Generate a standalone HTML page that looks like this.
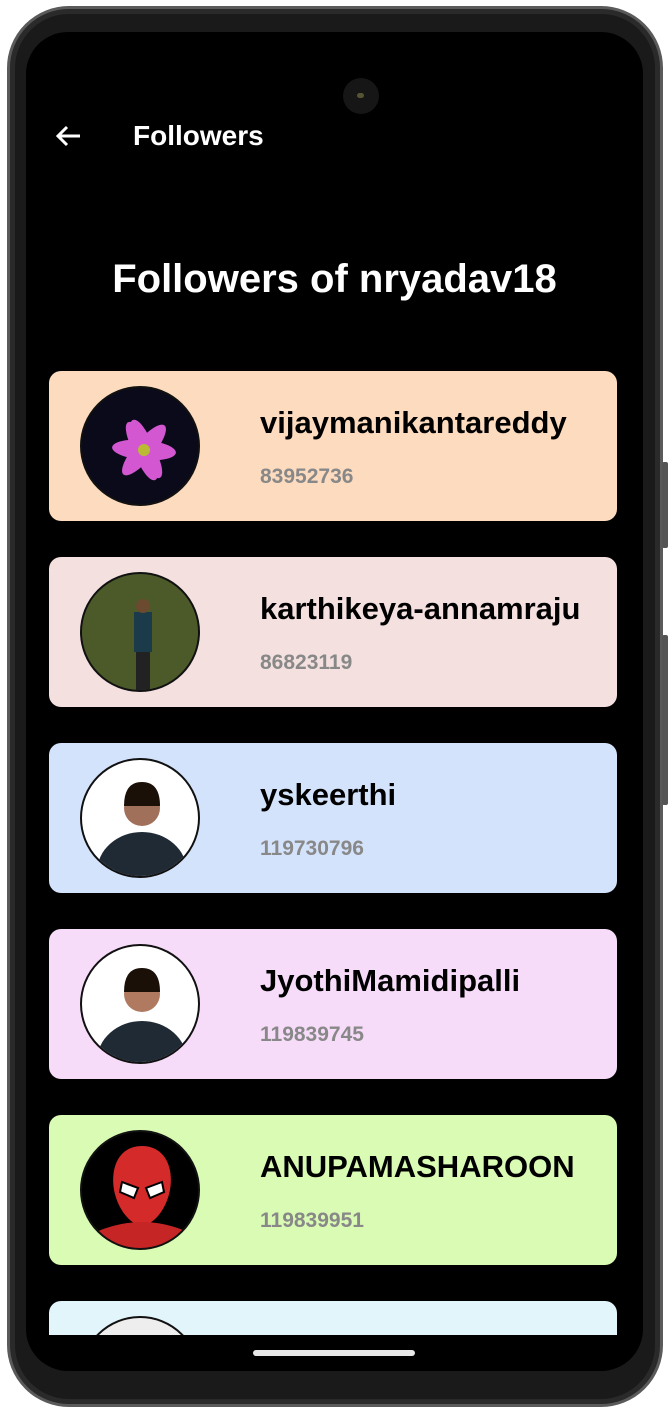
<!DOCTYPE html>
<html><head><meta charset="utf-8"><style>
*{margin:0;padding:0;box-sizing:border-box}
body{width:672px;height:1418px;background:#fff;position:relative;overflow:hidden;font-family:"Liberation Sans",sans-serif}
.phone{position:absolute;left:7px;top:6px;width:656px;height:1401px;border-radius:62px;background:#1a1a1a;border:3px solid #5a5a5a;box-shadow:inset 0 0 0 5px #2a2a2a}
.btn{position:absolute;left:662px;width:6px;background:#555;border-radius:2px}
.screen{position:absolute;left:26px;top:32px;width:617px;height:1339px;border-radius:42px;background:#000;overflow:hidden}
.cam{position:absolute;left:317px;top:46px;width:36px;height:36px;border-radius:50%;background:#161616}
.cam:after{content:"";position:absolute;left:14px;top:15px;width:7px;height:5px;border-radius:3px;background:#553}
.hdr{position:absolute;left:107px;top:88px;color:#fff;font-size:28px;font-weight:bold}
.title{position:absolute;left:0;width:617px;top:225px;text-align:center;color:#fff;font-size:40px;font-weight:bold}
.clip{position:absolute;left:0;top:0;width:617px;height:1303px;overflow:hidden}
.card{position:absolute;left:23px;width:568px;height:150px;border-radius:12px}
.av{position:absolute;left:31px;top:15px;width:120px;height:120px;border-radius:50%;border:2px solid #111;overflow:hidden}
.nm{position:absolute;left:211px;top:34px;font-size:31px;font-weight:bold;color:#000;white-space:nowrap}
.num{position:absolute;left:211px;top:94px;font-size:21px;font-weight:bold;color:#888}
.home{position:absolute;left:227px;top:1318px;width:162px;height:6px;border-radius:3px;background:#e8e8e8}
</style></head><body>
<div class="phone"></div>
<div class="btn" style="top:462px;height:86px"></div>
<div class="btn" style="top:635px;height:170px"></div>
<div class="screen">
<div class="cam"></div>
<svg style="position:absolute;left:28px;top:92px" width="28" height="24" viewBox="0 0 28 24"><path d="M26 12H4M13 3L4 12l9 9" stroke="#fff" stroke-width="3" fill="none"/></svg>
<div class="hdr">Followers</div>
<div class="title">Followers of nryadav18</div>
<div class="clip">
<div class="card" style="top:339px;background:#fddbbf">
 <div class="av" style="background:#0a0a1a"><svg width="120" height="120" viewBox="0 0 120 120"><g fill="#d257d0" transform="translate(62,62)"><ellipse rx="10" ry="32" transform="rotate(-20)"/><ellipse rx="10" ry="32" transform="rotate(40)"/><ellipse rx="10" ry="32" transform="rotate(95)"/><ellipse rx="10" ry="32" transform="rotate(150)"/></g><circle cx="62" cy="62" r="6" fill="#bb3"/></svg></div>
 <div class="nm">vijaymanikantareddy</div><div class="num">83952736</div></div>
<div class="card" style="top:525px;background:#f5e0e0">
 <div class="av" style="background:#4c5a2a"><svg width="120" height="120"><rect x="52" y="38" width="18" height="40" fill="#1b3a4a"/><circle cx="61" cy="32" r="7" fill="#6b4a30"/><rect x="54" y="78" width="14" height="38" fill="#222"/></svg></div>
 <div class="nm">karthikeya-annamraju</div><div class="num">86823119</div></div>
<div class="card" style="top:711px;background:#d4e3fc">
 <div class="av" style="background:#fff"><svg width="120" height="120"><ellipse cx="60" cy="112" rx="45" ry="40" fill="#1f2a35"/><circle cx="60" cy="48" r="18" fill="#a0705a"/><path d="M42 46q0-24 18-24t18 24" fill="#1a1008"/></svg></div>
 <div class="nm">yskeerthi</div><div class="num">119730796</div></div>
<div class="card" style="top:897px;background:#f7dcfa">
 <div class="av" style="background:#fff"><svg width="120" height="120"><ellipse cx="60" cy="115" rx="45" ry="40" fill="#1f2a35"/><circle cx="60" cy="48" r="18" fill="#b07a60"/><path d="M42 46q0-24 18-24t18 24" fill="#1a1008"/></svg></div>
 <div class="nm">JyothiMamidipalli</div><div class="num">119839745</div></div>
<div class="card" style="top:1083px;background:#d9fbb4">
 <div class="av" style="background:#000"><svg width="120" height="120"><path d="M60 14c-22 0-32 20-28 44 4 20 16 34 28 36 12-2 24-16 28-36 4-24-6-44-28-44z" fill="#d42a2a"/><path d="M14 100q46-20 92 0v20H14z" fill="#c52525"/><path d="M40 50l16 6-4 10-14-6zM80 50l-16 6 4 10 14-6z" fill="#fff" stroke="#000" stroke-width="2"/></svg></div>
 <div class="nm">ANUPAMASHAROON</div><div class="num">119839951</div></div>
<div class="card" style="top:1269px;background:#e2f5fb">
 <div class="av" style="background:#eee"></div></div>
</div>
<div class="home"></div>
</div>
</body></html>
